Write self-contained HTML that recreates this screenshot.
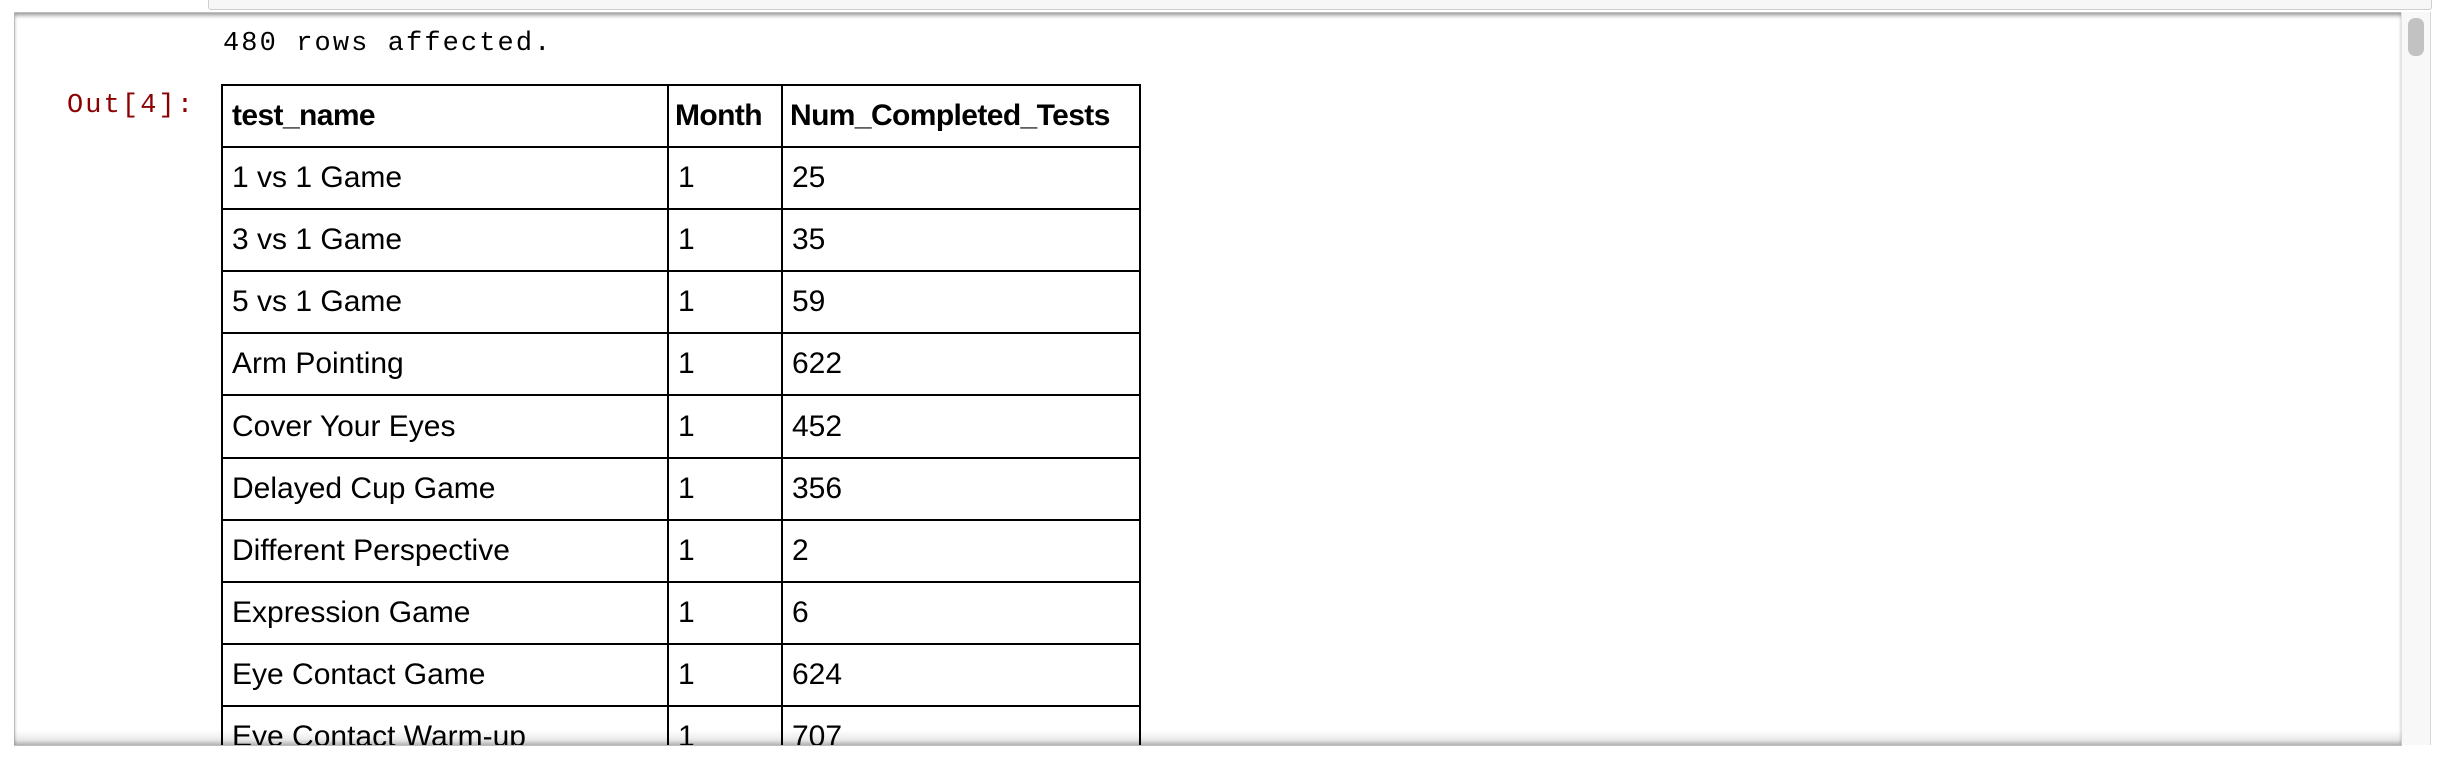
<!DOCTYPE html>
<html><head><meta charset="utf-8"><style>
html,body{margin:0;padding:0;width:2440px;height:762px;overflow:hidden;background:#fff;position:relative}
.topbar{position:absolute;left:208px;top:0;width:2222px;height:9px;background:#f7f7f7;border:1px solid #cfcfcf;border-top:none;border-radius:0 0 3px 3px}
.cell{position:absolute;left:14px;top:12px;width:2386px;height:732px;background:#fff;border:1px solid #bdbdbd;box-shadow:inset 0 4px 5px -2px rgba(0,0,0,.45), inset 0 -4px 5px -2px rgba(0,0,0,.25)}
.sb{position:absolute;left:2401px;top:12px;width:28px;height:733px;background:#f8f8f8;border-left:1px solid #e4e4e4;border-right:1px solid #d8d8d8}
.thumb{position:absolute;left:2408px;top:18px;width:16px;height:38px;background:#c2c2c2;border-radius:7px}
.mono{position:absolute;font-family:"Liberation Mono",monospace;font-size:27px;letter-spacing:2.1px;white-space:nowrap}
table{position:absolute;left:221px;top:84px;border-collapse:collapse;table-layout:fixed;width:918px;font-family:"Liberation Sans",Arial,sans-serif;font-size:30px;color:#000}
td,th{border:2px solid #000;height:60.1px;padding:0 0 0 9px;text-align:left;vertical-align:middle;white-space:nowrap;overflow:hidden}
th{font-weight:bold;letter-spacing:-0.6px}
</style></head><body>
<div class="topbar"></div>
<div class="cell"></div>
<div class="sb"></div><div class="thumb"></div>
<div class="mono" style="left:223px;top:29px;color:#000">480 rows affected.</div>
<div class="mono" style="left:67px;top:91px;color:#8b0000">Out[4]:</div>
<table>
<colgroup><col style="width:446px"><col style="width:114px"><col style="width:358px"></colgroup>
<tr><th>test_name</th><th style="padding-left:6px">Month</th><th style="padding-left:7px">Num_Completed_Tests</th></tr>
<tr><td>1 vs 1 Game</td><td>1</td><td>25</td></tr>
<tr><td>3 vs 1 Game</td><td>1</td><td>35</td></tr>
<tr><td>5 vs 1 Game</td><td>1</td><td>59</td></tr>
<tr><td>Arm Pointing</td><td>1</td><td>622</td></tr>
<tr><td>Cover Your Eyes</td><td>1</td><td>452</td></tr>
<tr><td>Delayed Cup Game</td><td>1</td><td>356</td></tr>
<tr><td>Different Perspective</td><td>1</td><td>2</td></tr>
<tr><td>Expression Game</td><td>1</td><td>6</td></tr>
<tr><td>Eye Contact Game</td><td>1</td><td>624</td></tr>
<tr><td>Eye Contact Warm-up</td><td>1</td><td>707</td></tr>
</table>
<div style="position:absolute;left:0;top:746px;width:2440px;height:16px;background:#fff"></div>
<div style="position:absolute;left:14px;top:730px;width:2388px;height:15px;background:linear-gradient(rgba(0,0,0,0),rgba(0,0,0,.12));border-bottom:1px solid #bdbdbd"></div>
</body></html>
